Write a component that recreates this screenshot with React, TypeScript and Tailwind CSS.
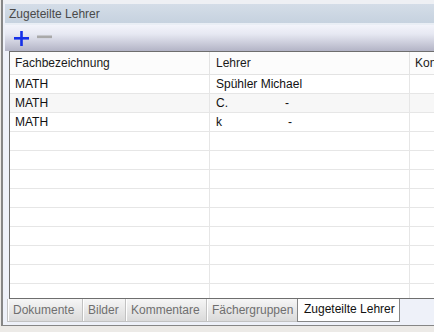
const font = { fontFamily: '"Liberation Sans", Arial, sans-serif' };

const rows = [
    { fach: "MATH", lehrer: <span>Spühler Michael</span> },
    {
        fach: "MATH",
        lehrer: (
            <span className="flex items-center">
                <span>C.</span>
                <span className="ml-[57px]">-</span>
            </span>
        ),
    },
    {
        fach: "MATH",
        lehrer: (
            <span className="flex items-center">
                <span>k</span>
                <span className="ml-[66px]">-</span>
            </span>
        ),
    },
];

const tabs = [
    { label: "Dokumente", w: "w-[75px]" },
    { label: "Bilder", w: "w-[43px]" },
    { label: "Kommentare", w: "w-[81px]" },
    { label: "Fächergruppen", w: "w-[91px]" },
];

function GridRow({ fach, lehrer, alt }: { fach?: string; lehrer?: React.ReactNode; alt?: boolean }) {
    return (
        <div className={`flex h-[19px] shrink-0 border-b border-[#e6e6e6] text-[12px] text-[#111] ${alt ? "bg-[#f7f7f7]" : "bg-white"}`}>
            <div className="w-[200px] shrink-0 border-r border-[#e6e6e6] pl-[5px] leading-[18px]">{fach}</div>
            <div className="w-[200px] shrink-0 border-r border-[#e6e6e6] pl-[6px] leading-[18px]">{lehrer}</div>
            <div className="flex-1" />
        </div>
    );
}

export default function App() {
    return (
        <div className="w-[434px] h-[332px] overflow-hidden bg-[#eceae7]" style={font}>
            <div className="ml-px flex h-[326px] flex-col border-b border-l-2 border-[#868686] bg-[#eef1f9]">
                <div className="h-[4px] shrink-0 bg-[#eef0f4]" />
                <div className="ml-[2px] flex h-[19px] shrink-0 items-center bg-gradient-to-b from-[#d4dde8] to-[#c6d2df] pl-[4px] text-[12px] text-[#4a4a4a]">
                    Zugeteilte Lehrer
                </div>
                <div className="ml-[2px] h-[2px] shrink-0 bg-[#e9eef5]" />
                <div className="ml-[2px] flex h-[26px] shrink-0 items-center bg-[linear-gradient(to_bottom,#f3f4fb_0%,#e6e8f2_35%,#b3b4c6_100%)] pl-[9px]">
                    <svg width="16" height="15" viewBox="0 0 16 15" className="mt-[1px]">
                        <rect x="0" y="6" width="15" height="2.6" fill="#1530e8" />
                        <rect x="6.2" y="0" width="2.6" height="15" fill="#1530e8" />
                    </svg>
                    <svg width="15" height="4" viewBox="0 0 15 4" className="ml-[7px] mb-[2px]">
                        <rect x="0" y="0.5" width="15" height="2.6" fill="#a9a9a9" />
                    </svg>
                </div>
                <div className="ml-[6px] flex h-[248px] shrink-0 flex-col overflow-hidden border-b border-l border-t border-[#6e6e6e] bg-white">
                    <div className="flex h-[23px] shrink-0 border-b border-[#e3e3e3] bg-[#fcfcfc] text-[12px] text-[#1a1a1a]">
                        <div className="w-[200px] shrink-0 border-r border-[#e3e3e3] pl-[5px] leading-[22px]">Fachbezeichnung</div>
                        <div className="w-[200px] shrink-0 border-r border-[#e3e3e3] pl-[6px] leading-[22px]">Lehrer</div>
                        <div className="flex-1 whitespace-nowrap pl-[5px] leading-[22px]">Kontakt</div>
                    </div>
                    {rows.map((r, i) => (
                        <GridRow key={i} fach={r.fach} lehrer={r.lehrer} alt={i % 2 === 1} />
                    ))}
                    {Array.from({ length: 10 }).map((_, i) => (
                        <GridRow key={"e" + i} />
                    ))}
                </div>
                <div className="ml-[4px] flex h-[23px] shrink-0 text-[12px]">
                    {tabs.map((t) => (
                        <div
                            key={t.label}
                            className={`${t.w} shrink-0 border-b border-l border-[#c2c2c2] bg-gradient-to-b from-[#f6f6f6] to-[#dadada] pl-[5px] leading-[22px] text-[#6f6f6f] shadow-[inset_1px_0_0_#ffffff]`}
                        >
                            {t.label}
                        </div>
                    ))}
                    <div className="w-[103px] shrink-0 border-x border-b border-[#868686] bg-white pl-[6px] leading-[21px] text-[#111]">
                        Zugeteilte Lehrer
                    </div>
                </div>
            </div>
        </div>
    );
}
